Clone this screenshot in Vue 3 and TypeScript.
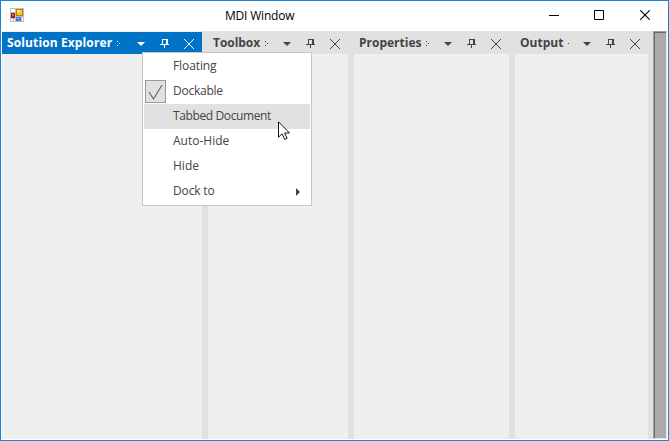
<script setup lang="ts">
interface Panel {
  title: string
  width: number
  gap: number
  titleWidth: number
  spacing: number
  dots: [number, number][]
  active?: boolean
}
interface MenuItem {
  label: string
  spacing: number
  checked?: boolean
  hover?: boolean
  submenu?: boolean
}

const grip: [number, number][] = [[0, 1], [0, 5], [2, 3]]
const panels: Panel[] = [
  { title: 'Solution Explorer', width: 200, gap: 6, titleWidth: 110, spacing: 0.12, dots: grip, active: true },
  { title: 'Toolbox', width: 140, gap: 6, titleWidth: 52, spacing: -0.05, dots: grip },
  { title: 'Properties', width: 155, gap: 6, titleWidth: 67, spacing: 0, dots: grip },
  { title: 'Output', width: 133, gap: 5, titleWidth: 48, spacing: 0, dots: [[0, 3]] },
]
const items: MenuItem[] = [
  { label: 'Floating', spacing: -0.1 },
  { label: 'Dockable', spacing: -0.25, checked: true },
  { label: 'Tabbed Document', spacing: -0.38, hover: true },
  { label: 'Auto-Hide', spacing: 0 },
  { label: 'Hide', spacing: 0 },
  { label: 'Dock to', spacing: -0.15, submenu: true },
]
</script>

<template>
  <div class="window">
    <header class="titlebar">
      <svg class="app-icon" width="14" height="14" viewBox="0 0 14 14" shape-rendering="crispEdges">
        <rect width="14" height="14" fill="#bdbdbd" />
        <rect x="1" y="1" width="4" height="3" fill="#fff" />
        <rect x="1" y="11" width="2" height="2" fill="#fff" />
        <rect x="4" y="11" width="1" height="2" fill="#fff" />
        <rect x="12" y="9" width="1" height="4" fill="#fff" />
        <rect x="1" y="5" width="4" height="5" fill="#a01c10" />
        <rect x="2" y="6" width="2" height="2" fill="#e0604c" />
        <rect x="6" y="1" width="7" height="7" fill="#b87f08" />
        <rect x="7" y="2" width="5" height="5" fill="#f9c62c" />
        <rect x="7" y="2" width="3" height="2" fill="#ffe68a" />
        <rect x="6" y="9" width="5" height="4" fill="#3f78d8" />
        <rect x="7" y="10" width="3" height="1" fill="#8ab8f8" />
      </svg>
      <h1>MDI Window</h1>
      <div class="controls">
        <svg width="10" height="10" viewBox="0 0 10 10" shape-rendering="crispEdges"><path d="M0 5h10v1H0z" fill="#000" /></svg>
        <svg width="10" height="10" viewBox="0 0 10 10"><path d="M.5.5h9v9h-9z" fill="none" stroke="#000" /></svg>
        <svg class="close-window" width="10" height="10" viewBox="0 0 10 10"><path d="M.2.2l9.6 9.6M9.8.2L.2 9.8" stroke="#000" stroke-width="1.1" /></svg>
      </div>
    </header>

    <main class="workspace">
      <section
        v-for="p in panels"
        :key="p.title"
        class="panel"
        :class="{ active: p.active }"
        :style="{ width: p.width + 'px', marginRight: p.gap + 'px' }"
      >
        <div class="panel-head">
          <h2 :style="{ width: p.titleWidth + 'px', letterSpacing: p.spacing + 'px' }">{{ p.title }}</h2>
          <svg class="grip" width="4" height="8" viewBox="0 0 4 8" shape-rendering="crispEdges">
            <rect v-for="(d, i) in p.dots" :key="i" :x="d[0]" :y="d[1]" width="1" height="1" fill="currentColor" />
          </svg>
          <svg class="arrow" width="8" height="4" viewBox="0 0 8 4"><path d="M0 0h8L4 4z" fill="currentColor" /></svg>
          <svg class="pin" width="9" height="9" viewBox="0 0 9 9" shape-rendering="crispEdges">
            <path d="M2 0h6v5h1v1H5v3H4V6H0V5h2zM3 1v4h3V1z" fill="currentColor" fill-rule="evenodd" />
          </svg>
          <svg class="close" width="10" height="10" viewBox="0 0 10 10"><path d="M0 0l10 10M10 0L0 10" stroke="currentColor" /></svg>
        </div>
      </section>
      <aside class="mdi-area"></aside>
    </main>

    <ul class="menu">
      <li v-for="item in items" :key="item.label" :class="{ hover: item.hover }">
        <span class="check-slot">
          <span v-if="item.checked" class="check">
            <svg width="15" height="16" viewBox="0 0 15 16"><path d="M1 8l4.5 7L14 1" fill="none" stroke="#6a6a6a" stroke-width="1.2" /></svg>
          </span>
        </span>
        <span class="label" :style="{ letterSpacing: item.spacing + 'px' }">{{ item.label }}</span>
        <svg v-if="item.submenu" width="4" height="8" viewBox="0 0 4 8"><path d="M0 0l4 4-4 4z" fill="#444" /></svg>
      </li>
    </ul>

    <svg class="cursor" width="13" height="20" viewBox="0 0 13 20">
      <path d="M.5.8v15.4l3.6-3.4 2.6 5.7 2.4-1.1-2.5-5.4h4.9z" fill="#fff" stroke="#111" />
    </svg>
  </div>
</template>

<style>
body {
  margin: 0;
  background: #fff;
}
</style>

<style scoped>
.window {
  position: relative;
  box-sizing: border-box;
  width: 669px;
  height: 441px;
  display: flex;
  flex-direction: column;
  border: 1px solid #1883d7;
  background: #fff;
  font-family: 'Open Sans', 'Noto Sans', sans-serif;
  color: #444;
  overflow: hidden;
}
svg {
  display: block;
  flex: none;
}
.titlebar {
  box-sizing: border-box;
  height: 30px;
  display: flex;
  align-items: center;
  padding: 0 18px 2px 9px;
}
h1 {
  flex: 1;
  margin: 2px 0 0 201px;
  font-size: 12px;
  font-weight: 400;
  line-height: 16px;
  letter-spacing: -0.2px;
  color: #000;
}
.controls {
  display: flex;
  gap: 35px;
}
.close-window {
  margin-left: 1px;
}
.workspace {
  flex: 1;
  display: flex;
  margin: 0 1px 1px;
  background: #e1e1e1;
}
.panel {
  flex: none;
  background: #efefef;
}
.panel-head {
  display: flex;
  align-items: center;
  height: 23px;
  box-sizing: border-box;
  padding: 1px 8px 0 5px;
  background: #e1e1e1;
}
.active .panel-head {
  height: 22px;
  margin: 1px 0 0;
  padding-top: 0;
  background: #0173c7;
  color: #fff;
}
h2 {
  flex: none;
  margin: 0;
  font-size: 12px;
  font-weight: 700;
  line-height: 16px;
  white-space: nowrap;
}
.grip {
  margin-top: 2px;
}
.arrow {
  margin: 2px 15px 0 auto;
}
.pin {
  margin: 1px 15px 0 0;
}
.close {
  margin-top: 2px;
}
.mdi-area {
  flex: 1;
  box-sizing: border-box;
  background: #ababab;
  border: 1px solid #a0a0a0;
  border-right-color: #e3e3e3;
  border-bottom-color: #e3e3e3;
  box-shadow: inset 1px 1px #696969;
}
.menu {
  position: absolute;
  left: 141px;
  top: 51px;
  box-sizing: border-box;
  width: 170px;
  height: 154px;
  margin: 0;
  padding: 1px;
  border: 1px solid #c6c6c6;
  background: #fff;
  list-style: none;
  font-size: 12px;
}
.menu li {
  display: flex;
  align-items: center;
  height: 25px;
  padding-right: 10px;
}
.menu li.hover {
  background: #e1e1e1;
}
.check-slot {
  width: 29px;
}
.check {
  display: flex;
  align-items: center;
  justify-content: center;
  box-sizing: border-box;
  width: 21px;
  height: 23px;
  margin-left: 1px;
  border: 1px solid #999;
  background: #e1e1e1;
}
.label {
  flex: 1;
  padding-bottom: 2px;
  line-height: 16px;
}
.cursor {
  position: absolute;
  left: 277px;
  top: 120px;
}
</style>
